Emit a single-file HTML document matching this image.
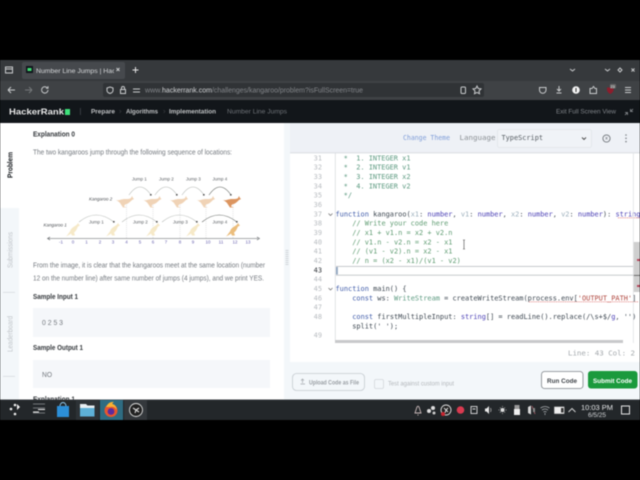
<!DOCTYPE html>
<html><head><meta charset="utf-8"><title>Number Line Jumps</title>
<style>
html,body{margin:0;padding:0;background:#000;width:640px;height:480px;overflow:hidden}
svg{display:block;filter:blur(.4px)}
text{font-family:"Liberation Sans",sans-serif;white-space:pre}
.m,.m text{font-family:"DejaVu Sans Mono","Liberation Mono",monospace;font-size:6.94px}
.c{fill:#5f9c72}.k{fill:#3f5ba9}.t{fill:#4a3fb5}.d{fill:#9db0bd}.p{fill:#3c4650}.g{fill:#5c9a80}
.n{fill:#b9bdc1;text-anchor:end}
.body{font-size:7px;fill:#74797f}
.h{font-size:7px;fill:#34383c;font-weight:bold}
.ic{fill:none;stroke:#c9cbcd;stroke-width:1}
</style></head><body>
<svg width="640" height="480" viewBox="0 0 640 480" xmlns="http://www.w3.org/2000/svg">
<defs>
<clipPath id="tabc"><rect x="30" y="60" width="84" height="20"/></clipPath>
<clipPath id="codec"><rect x="290" y="153" width="350" height="187"/></clipPath>
<path id="k2" d="M-10,-2C-6,-1-4,-3 0,-3C3,-3 5,-3 6,-4L7,-6L8,-4L9,-3L7,-2C5,0 3,2 0,2.500L-1,4.500L2,5.500L-2,5.500L-4,2.500C-5,1-6,-1-10,-2Z"/>
<path id="k1" d="M-7,7C-5,5-4,3-3,2C-2,-2 2,-3 4,-5L5,-6.500L6,-5L7,-4L5,-3C4,-1 3,2 1,3L2,6L-1,6L-2,4C-3,5-5,6-7,7Z"/>
</defs>
<rect width="640" height="480" fill="#000"/>
<!-- tab bar -->
<rect y="60" width="640" height="21" fill="#36393c"/>
<rect x="22" y="62" width="103" height="17" rx="2" fill="#46494d"/>
<rect x="5.500" y="67" width="7" height="6" class="ic"/><line x1="5" y1="69" x2="13" y2="69" class="ic"/>
<rect x="26" y="66" width="7" height="7" fill="#10151b"/><rect x="27.500" y="68" width="4" height="3" fill="#3ddb70"/>
<text x="36" y="73" font-size="6.600" fill="#d5d7d9" clip-path="url(#tabc)" textLength="83" lengthAdjust="spacingAndGlyphs">Number Line Jumps | Hack</text>
<path d="M116.500,68l3,3m0,-3l-3,3" class="ic"/>
<path d="M135.500,67v6m-3,-3h6" stroke="#e5e5e5" fill="none" stroke-width="1"/>
<path d="M570,69l2.500,2l2.500,-2" class="ic"/>
<path d="M605,69l2.500,2l2.500,-2" class="ic"/><path d="M620,68l2,2l-2,2l-2,-2z" class="ic"/><path d="M631.500,68.500l3,3m0,-3l-3,3" class="ic"/>
<!-- toolbar -->
<rect y="81" width="640" height="19" fill="#3f4245"/>
<path d="M8,90h7m-7,0l3,-3m-3,3l3,3" class="ic"/>
<path d="M32,90h-7m7,0l-3,-3m3,3l-3,3" fill="none" stroke="#75787a"/>
<path d="M48,90a3.200,3.200 0 1 1 -1,-2.400m1,-1.400v2h-2" class="ic"/>
<rect x="103" y="83" width="381" height="14" rx="2" fill="#303336"/>
<path d="M110,87l3,1v2.500q0,2-3,3q-3,-1-3,-3v-2.500z" class="ic"/>
<rect x="120.500" y="89.500" width="5" height="4" class="ic"/><path d="M121.500,89.500v-1.500a1.500,1.500 0 0 1 3,0v1.500" class="ic"/>
<path d="M133,89h7m-7,3h7" class="ic"/>
<text x="145" y="92.500" font-size="7" fill="#83868a" textLength="17" lengthAdjust="spacingAndGlyphs">www.</text>
<text x="162" y="92.500" font-size="7" fill="#d2d4d6" textLength="50" lengthAdjust="spacingAndGlyphs">hackerrank.com</text>
<text x="212" y="92.500" font-size="7" fill="#83868a" textLength="151" lengthAdjust="spacingAndGlyphs">/challenges/kangaroo/problem?isFullScreen=true</text>
<rect x="461" y="87" width="4.500" height="6.500" rx="1" class="ic"/>
<path d="M477,86l1.200,2.500l2.800,.4l-2,2l.5,2.800l-2.500,-1.300l-2.500,1.300l.5,-2.800l-2,-2l2.800,-.4z" class="ic"/>
<path d="M539.500,87.500h6.500v2.500a3.200,3.200 0 0 1 -6.500,0z" class="ic"/>
<path d="M559,86v5m-2,-2l2,2l2,-2m-4.500,4h5" class="ic"/>
<circle cx="576" cy="90" r="3.800" fill="#f2f2f2"/><rect x="575.500" y="88" width="1" height="4" fill="#333"/>
<path d="M590,93.500v-5h2l1.500,-2l1.500,2h1.500v5z" class="ic"/>
<path d="M607,87.500h6.500v3q-1,2.500-3.200,3.500q-2.300,-1-3.300,-3.500z" fill="#8d1d2c"/>
<rect x="610" y="84" width="6" height="4.500" rx="1" fill="#666"/><text x="610.500" y="87.800" font-size="3.800" fill="#eee">23</text>
<path d="M625,87.500h6m-6,2.500h6m-6,2.500h6" class="ic"/>
<!-- HR header -->
<rect y="100" width="640" height="23" fill="#12161a"/>
<text x="9" y="114.500" font-size="8.500" font-weight="bold" fill="#e9e9e9" textLength="55" lengthAdjust="spacingAndGlyphs">HackerRank</text>
<rect x="65" y="109" width="5" height="6" fill="#3ee07a"/>
<rect x="80" y="108" width=".8" height="7" fill="#40444a"/>
<text x="91" y="113.500" font-size="6.400" font-weight="bold" fill="#bfc1c3" textLength="24" lengthAdjust="spacingAndGlyphs">Prepare</text>
<text x="126" y="113.500" font-size="6.400" font-weight="bold" fill="#bfc1c3" textLength="32" lengthAdjust="spacingAndGlyphs">Algorithms</text>
<text x="169" y="113.500" font-size="6.400" font-weight="bold" fill="#bfc1c3" textLength="47" lengthAdjust="spacingAndGlyphs">Implementation</text>
<text x="227" y="113.500" font-size="6.400" fill="#6e7277" textLength="60" lengthAdjust="spacingAndGlyphs">Number Line Jumps</text>
<path d="M119.500,110l1.500,1.500l-1.500,1.500m44,-3l1.500,1.500l-1.500,1.500" fill="none" stroke="#35383c" stroke-width=".7"/>
<text x="556" y="113.500" font-size="6.400" fill="#7f8388" textLength="60" lengthAdjust="spacingAndGlyphs">Exit Full Screen View</text>
<path d="M625,115l2.500,-2.500m-2.500,0h2.500v2.500M633,109l-2.500,2.500m2.500,0h-2.500v-2.500" fill="none" stroke="#8c9094" stroke-width=".8"/>
<!-- left panel -->
<rect y="123" width="290" height="277" fill="#fff"/>
<rect y="208" width="19" height="192" fill="#f3f7fa"/>
<rect x="284" y="123" width="6" height="277" fill="#f3f7fa"/>
<g fill="#c9cdd1"><rect x="285.500" y="250" width="3" height=".8"/><rect x="285.500" y="252" width="3" height=".8"/><rect x="285.500" y="254" width="3" height=".8"/><rect x="285.500" y="256" width="3" height=".8"/><rect x="285.500" y="258" width="3" height=".8"/><rect x="285.500" y="260" width="3" height=".8"/><rect x="285.500" y="262" width="3" height=".8"/><rect x="285.500" y="264" width="3" height=".8"/></g>
<text transform="translate(12.500,178) rotate(-90)" font-size="7" font-weight="bold" fill="#14181c" textLength="26" lengthAdjust="spacingAndGlyphs">Problem</text>
<text transform="translate(12.500,268) rotate(-90)" font-size="7" fill="#c0c5c9" textLength="36" lengthAdjust="spacingAndGlyphs">Submissions</text>
<text transform="translate(12.500,352) rotate(-90)" font-size="7" fill="#c0c5c9" textLength="36" lengthAdjust="spacingAndGlyphs">Leaderboard</text>
<rect x="3" y="292" width="12" height=".7" fill="#d4d8dc"/><rect x="3" y="376" width="12" height=".7" fill="#d4d8dc"/>
<text x="33" y="136.500" class="h" textLength="42" lengthAdjust="spacingAndGlyphs">Explanation 0</text>
<text x="33" y="154.700" class="body" textLength="199" lengthAdjust="spacingAndGlyphs">The two kangaroos jump through the following sequence of locations:</text>
<!-- diagram -->
<g stroke="#c9ccd0" stroke-width=".5" stroke-dasharray="1 1"><path d="M126.500,205v33M153,205v33M180,205v33M206,205v33M233,205v33"/></g>
<g fill="#f0d3b6"><use href="#k2" x="125" y="202"/><use href="#k2" x="152.500" y="202"/><use href="#k2" x="179" y="202"/><use href="#k2" x="206" y="202"/></g>
<use href="#k2" x="232" y="202" fill="#dc9560"/>
<g fill="#f6e9c8"><use href="#k1" x="73" y="229.500"/><use href="#k1" x="113" y="229.500"/><use href="#k1" x="153" y="229.500"/><use href="#k1" x="193" y="229.500"/></g>
<use href="#k1" x="233" y="229.500" fill="#ebbd7c"/>
<g fill="none" stroke="#b4b8b4" stroke-width=".6">
<path d="M129,195Q140,179 151,195"/><path d="M155,195Q166,179 177,195"/><path d="M182,195Q193,179 204,195"/>
<path d="M79,222Q96,208 114,222"/><path d="M122,222Q139,208 157,222"/><path d="M162,222Q179,208 197,222"/>
</g>
<g fill="none" stroke="#5e625e" stroke-width=".6"><path d="M209,195Q220,179 231,195"/><path d="M202,222Q219,208 237,222"/></g>
<g fill="#555"><rect x="150" y="194" width="1.600" height="1.600"/><rect x="176" y="194" width="1.600" height="1.600"/><rect x="203" y="194" width="1.600" height="1.600"/><rect x="230" y="194" width="1.600" height="1.600"/><rect x="113" y="221" width="1.600" height="1.600"/><rect x="156" y="221" width="1.600" height="1.600"/><rect x="196" y="221" width="1.600" height="1.600"/><rect x="236" y="221" width="1.600" height="1.600"/></g>
<g font-size="4.500" fill="#5b5f63">
<text x="132" y="180.500">Jump 1</text><text x="159" y="180.500">Jump 2</text><text x="186" y="180.500">Jump 3</text><text x="212.500" y="180.500">Jump 4</text>
<text x="89" y="223.500">Jump 1</text><text x="133" y="223.500">Jump 2</text><text x="173" y="223.500">Jump 3</text><text x="212.500" y="223.500">Jump 4</text>
</g>
<text x="89" y="200.500" font-size="4.500" font-style="italic" fill="#4b4f53">Kangaroo 2</text>
<text x="43.500" y="226.500" font-size="4.500" font-style="italic" fill="#4b4f53">Kangaroo 1</text>
<path d="M48,238.500H258" stroke="#55595d" stroke-width=".6"/><path d="M50,237l-2.500,1.500l2.500,1.500M257,237l2.500,1.500l-2.500,1.500" fill="none" stroke="#55595d" stroke-width=".6"/>
<g font-size="4.500" fill="#6a64b0" text-anchor="middle">
<text x="61" y="243.500">-1</text><text x="73" y="243.500">0</text><text x="86.500" y="243.500">1</text><text x="100" y="243.500">2</text><text x="113" y="243.500">3</text><text x="126.500" y="243.500">4</text><text x="140" y="243.500">5</text><text x="153" y="243.500">6</text><text x="166" y="243.500">7</text><text x="180" y="243.500">8</text><text x="193" y="243.500">9</text><text x="208" y="243.500">10</text><text x="221" y="243.500">11</text><text x="235" y="243.500">12</text><text x="248" y="243.500">13</text>
</g>
<text x="33" y="267.700" class="body" textLength="232" lengthAdjust="spacingAndGlyphs">From the image, it is clear that the kangaroos meet at the same location (number</text>
<text x="33" y="280.700" class="body" textLength="231" lengthAdjust="spacingAndGlyphs">12 on the number line) after same number of jumps (4 jumps), and we print YES.</text>
<text x="33" y="299" class="h" textLength="45" lengthAdjust="spacingAndGlyphs">Sample Input 1</text>
<rect x="33" y="308" width="237" height="29" fill="#f5f7fa"/>
<text x="42" y="325" class="body" textLength="21" lengthAdjust="spacingAndGlyphs">0 2 5 3</text>
<text x="33" y="350" class="h" textLength="50" lengthAdjust="spacingAndGlyphs">Sample Output 1</text>
<rect x="33" y="360" width="237" height="28" fill="#f5f7fa"/>
<text x="42" y="377" class="body" textLength="10" lengthAdjust="spacingAndGlyphs">NO</text>
<text x="33" y="401.500" class="h" textLength="42" lengthAdjust="spacingAndGlyphs">Explanation 1</text>
<!-- right panel -->
<rect x="290" y="123" width="350" height="277" fill="#f3f7fa"/>
<rect x="290" y="123" width="350" height="29" fill="#eef1f6"/>
<rect x="290" y="152" width="350" height="1.500" fill="#e2e5e9"/>
<rect x="290" y="153.500" width="350" height="208.500" fill="#fff"/>
<text class="m" x="403" y="140" fill="#7f9dd8" style="font-size:6.600px" textLength="47" lengthAdjust="spacingAndGlyphs">Change Theme</text>
<text class="m" x="459.500" y="140" fill="#8b9095" style="font-size:6.900px" textLength="36" lengthAdjust="spacingAndGlyphs">Language</text>
<rect x="497.500" y="129.500" width="94" height="18" rx="2" fill="#f0f3f7" stroke="#e1e4e8" stroke-width=".8"/>
<text class="m" x="501.500" y="140" fill="#565c62" textLength="41.500" lengthAdjust="spacingAndGlyphs">TypeScript</text>
<path d="M582,137.500l2,2l2,-2" fill="none" stroke="#444" stroke-width=".9"/>
<circle cx="606.500" cy="138.500" r="3.600" fill="none" stroke="#6f7479" stroke-width=".9"/><path d="M605.500,137l2,2.500m0,-2.500l-2,2.500" stroke="#6f7479" stroke-width=".6"/>
<g fill="#7d8287"><circle cx="626" cy="135" r=".8"/><circle cx="626" cy="138.300" r=".8"/><circle cx="626" cy="141.600" r=".8"/></g>
<!-- editor -->
<g clip-path="url(#codec)">
<rect x="335" y="153" width=".6" height="187" fill="#d0d3d6"/>
<rect x="336" y="266" width="297" height=".8" fill="#b9bcc0"/><rect x="336" y="274.800" width="297" height=".8" fill="#b9bcc0"/>
<rect x="336" y="267" width="1.800" height="7.500" fill="#8da3bd"/>
<g class="m">
<text class="n" x="322" y="160.300">31</text><text class="n" x="322" y="169.600">32</text><text class="n" x="322" y="179">33</text><text class="n" x="322" y="188.300">34</text><text class="n" x="322" y="197.600">35</text><text class="n" x="322" y="207">36</text><text class="n" x="322" y="216.300">37</text><text class="n" x="322" y="225.600">38</text><text class="n" x="322" y="235">39</text><text class="n" x="322" y="244.300">40</text><text class="n" x="322" y="253.600">41</text><text class="n" x="322" y="263">42</text><text class="n" x="322" y="272.300" style="fill:#30353a">43</text><text class="n" x="322" y="281.600">44</text><text class="n" x="322" y="291">45</text><text class="n" x="322" y="300.300">46</text><text class="n" x="322" y="309.600">47</text><text class="n" x="322" y="319">48</text><text class="n" x="322" y="337.600">49</text>
<text x="339.500" y="160.300" class="g"> *  1. INTEGER x1</text>
<text x="339.500" y="169.600" class="g"> *  2. INTEGER v1</text>
<text x="339.500" y="179" class="g"> *  3. INTEGER x2</text>
<text x="339.500" y="188.300" class="g"> *  4. INTEGER v2</text>
<text x="339.500" y="197.600" class="g"> */</text>
<text x="335.500" y="216.300" class="p"><tspan class="k">function</tspan> kangaroo(<tspan class="d">x1</tspan>: <tspan class="t">number</tspan>, <tspan class="d">v1</tspan>: <tspan class="t">number</tspan>, <tspan class="d">x2</tspan>: <tspan class="t">number</tspan>, <tspan class="d">v2</tspan>: <tspan class="t">number</tspan>): <tspan class="t">string</tspan></text>
<text x="335.500" y="225.600" class="c">    // Write your code here</text>
<text x="335.500" y="235" class="c">    // x1 + v1.n = x2 + v2.n</text>
<text x="335.500" y="244.300" class="c">    // v1.n - v2.n = x2 - x1</text>
<text x="335.500" y="253.600" class="c">    // (v1 - v2).n = x2 - x1</text>
<text x="335.500" y="263" class="c">    // n = (x2 - x1)/(v1 - v2)</text>
<text x="335.500" y="291" class="p"><tspan class="k">function</tspan> main() {</text>
<text x="335.500" y="300.300" class="p">    <tspan class="k">const</tspan> ws: <tspan fill="#5c9a80">WriteStream</tspan> = createWriteStream(process.env[<tspan fill="#b0473f">'OUTPUT_PATH'</tspan>]</text>
<text x="335.500" y="319" class="p">    <tspan class="k">const</tspan> firstMultipleInput: <tspan class="t">string</tspan>[] = readLine().replace(/\s+$/<tspan class="t">g</tspan>, '')</text>
<text x="335.500" y="328.300" class="p">    split(' ');</text>
</g>
<path d="M328.500,213.500l2,2l2,-2M328.500,288l2,2l2,-2" fill="none" stroke="#666" stroke-width=".7"/>
<path d="M618,217.800h22M529,301.800h109" stroke="#d9534f" stroke-width=".6" stroke-dasharray="1 .8"/>
</g>
<rect x="633" y="153" width=".7" height="190" fill="#dcdfe2"/>
<rect x="633.700" y="242" width="6.300" height="50" fill="#cfcfcf"/>
<rect x="637" y="259" width="3" height="2" fill="#b5455a"/><rect x="637" y="285" width="3" height="2" fill="#b5455a"/>
<rect x="633.700" y="275" width="6.300" height=".8" fill="#555"/>
<rect x="335" y="340" width="288" height="3" fill="#c8c9cb"/>
<path d="M463,240h2m-1,0v9m-1,0h2" stroke="#444" stroke-width=".6"/>
<text class="m" x="568" y="355.500" fill="#a3a8ac" style="font-size:7.300px" textLength="67" lengthAdjust="spacingAndGlyphs">Line: 43 Col: 2</text>
<!-- bottom bar -->
<rect x="292.500" y="373.500" width="72" height="17" rx="4" fill="none" stroke="#c5cbd0" stroke-width=".8"/>
<path d="M302.500,379v4m-1.500,-2.500l1.500,-1.500l1.500,1.500m-3.500,3.500h4.500" fill="none" stroke="#a2a7ac" stroke-width=".7"/>
<text x="309" y="384.500" font-size="6.200" font-weight="bold" fill="#9a9fa4" textLength="50" lengthAdjust="spacingAndGlyphs">Upload Code as File</text>
<rect x="374.500" y="379.500" width="9" height="9" rx="1.500" fill="none" stroke="#d3d7db" stroke-width=".8"/>
<text x="388" y="385.500" font-size="6.200" fill="#b4b8bc" textLength="66" lengthAdjust="spacingAndGlyphs">Test against custom input</text>
<rect x="541.500" y="371.500" width="41.500" height="17" rx="3" fill="#fff" stroke="#7f8489" stroke-width=".8"/>
<text x="547" y="383" font-size="6.800" font-weight="bold" fill="#40454a" textLength="30" lengthAdjust="spacingAndGlyphs">Run Code</text>
<rect x="588" y="371" width="49.500" height="17.500" rx="3" fill="#1b9a3d"/>
<text x="593" y="383" font-size="6.800" font-weight="bold" fill="#fff" textLength="39" lengthAdjust="spacingAndGlyphs">Submit Code</text>
<!-- taskbar -->
<rect y="400" width="640" height="20" fill="#23272a"/>
<rect y="399.500" width="640" height=".8" fill="#3c4044"/>
<rect x="76" y="400" width="23" height="20" fill="#2d3236"/>
<rect x="100" y="400" width="23" height="20" fill="#2f6c82"/>
<rect x="124" y="400" width="23" height="20" fill="#34383c"/>
<g fill="#f0f0f0"><circle cx="15" cy="405" r="1.300"/><circle cx="11" cy="409" r="1.300"/><circle cx="15" cy="414" r="1.300"/><path d="M17,404l3,3l-3,3z"/></g>
<path d="M33,404h12M33,408h12M33,413h12" stroke="#8e9295" stroke-width=".8"/><path d="M38,409.500h7M33,412h6" stroke="#eee" stroke-width=".9"/>
<path d="M57,406h12v11h-12z" fill="#2c8fd8"/><path d="M60,406a3,3.500 0 0 1 6,0" fill="none" stroke="#8fc9ef" stroke-width=".9"/>
<path d="M80,404h6l1.500,1.500h7v3h-14.500z" fill="#e8eef1"/><path d="M80,408h14.500v8.500h-14.500z" fill="#5eb0d6"/>
<circle cx="111" cy="410.500" r="6.500" fill="#e8562e"/><path d="M106,407q3,-6 8,-5q-2,1-1.500,2q4,1 4,6q-2,-4-6,-3z" fill="#f9b233"/><circle cx="111" cy="411.500" r="3.400" fill="#5b2a9e"/>
<circle cx="136" cy="410" r="6.500" fill="#222" stroke="#ddd" stroke-width=".9"/><path d="M133,408l3,2l-1,3M139,408l-3,2l3,2" fill="none" stroke="#ddd" stroke-width="1.100"/>
<path d="M415,413l2,-6q1,-1.500 2,0l2,6zM417.500,415h1" fill="none" stroke="#c9b9b9" stroke-width=".9"/>
<circle cx="429" cy="411" r="2" fill="#ddd"/><circle cx="433" cy="408" r="2" fill="#ddd"/><circle cx="434" cy="413" r="1.500" fill="#ccc"/>
<circle cx="446" cy="410" r="5" fill="#222" stroke="#ddd" stroke-width=".9"/><path d="M444,408l2,2l-1,3M448,408l-2,2l2,2" fill="none" stroke="#ddd"/><circle cx="443" cy="414" r="2" fill="#c8242f"/>
<circle cx="460.500" cy="410" r="3.800" fill="#d93a50"/>
<rect x="471" y="406.500" width="6" height="7" fill="none" stroke="#ddd" stroke-width=".9"/><path d="M472.500,409h3" stroke="#ddd"/>
<path d="M485,408.500h1.500l2.500,-2.500v8l-2.500,-2.500h-1.500z" fill="#e8e8e8"/><path d="M490.500,408q1,2 0,4" fill="none" stroke="#aaa" stroke-width=".8"/>
<circle cx="502.500" cy="410" r="2" fill="#ddd"/><path d="M502.500,406v1M502.500,413v1M498.500,410h1M505.500,410h1M500,407.500l.7,.7M505,412.500l-.7,-.7M505,407.500l-.7,.7M500,412.500l.7,-.7" stroke="#bbb" stroke-width=".7"/>
<rect x="514.500" y="405" width="5" height="4" fill="#999"/><rect x="514" y="409" width="6" height="6" fill="#eee"/>
<path d="M528,407l3,-1.500v9l-3,-1.500z" fill="#d8d8d8"/><path d="M532,406l3,8" stroke="#a8606a" stroke-width=".9"/><path d="M533,408h2v4h-2z" fill="#888"/>
<path d="M540.500,408q4.500,-3 9,0M542,410q3,-2 6,0M543.500,412q1.500,-1 3,0M545,413v2" fill="none" stroke="#a9adb0" stroke-width=".8"/>
<rect x="554.500" y="407" width="9.500" height="6.500" fill="#eee" stroke="#ddd" stroke-width=".6"/><rect x="561" y="408" width="2.500" height="4.500" fill="#333"/>
<path d="M568.500,412l3.500,-3.500l3.500,3.500" fill="none" stroke="#ddd" stroke-width=".9"/>
<text x="581" y="410" font-size="7.600" fill="#e3e5e6" textLength="32" lengthAdjust="spacingAndGlyphs">10:03 PM</text>
<text x="588" y="417" font-size="6" fill="#d0d2d4" textLength="18" lengthAdjust="spacingAndGlyphs">6/5/25</text>
<rect x="621.500" y="406" width="8" height="8" fill="none" stroke="#e5e5e5" stroke-width="1"/>
<rect y="420" width="640" height="60" fill="#000"/>
</svg>
</body></html>
